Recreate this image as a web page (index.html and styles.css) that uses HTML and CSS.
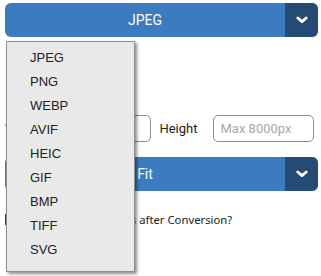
FILE: index.html
```html
<!DOCTYPE html>
<html>
<head>
<meta charset="utf-8">
<link rel="stylesheet" href="styles.css">
</head>
<body>
<div class="page">
  <div class="select select-format">
    <div class="select-value">JPEG</div>
    <div class="select-arrow">
      <svg width="12" height="8" viewBox="0 0 12 8"><path d="M1.8 2 L6 5.6 L10.2 2" fill="none" stroke="#fff" stroke-width="2.8" stroke-linecap="round" stroke-linejoin="round"/></svg>
    </div>
  </div>

  <div class="size-row">
    <label class="size-label">Width</label>
    <input class="size-input size-width" type="text" placeholder="Max 8000px">
    <label class="size-label">Height</label>
    <input class="size-input size-height" type="text" placeholder="Max 8000px">
  </div>

  <div class="select select-fit">
    <div class="select-value">Fit</div>
    <div class="select-arrow">
      <svg width="12" height="8" viewBox="0 0 12 8"><path d="M1.8 2 L6 5.6 L10.2 2" fill="none" stroke="#fff" stroke-width="2.8" stroke-linecap="round" stroke-linejoin="round"/></svg>
    </div>
  </div>

  <div class="check-row">
    <span class="check-box"></span>
    <span class="check-text">Remove EXIF Tags after Conversion?</span>
  </div>

  <ul class="menu">
    <li class="menu-item">JPEG</li>
    <li class="menu-item">PNG</li>
    <li class="menu-item">WEBP</li>
    <li class="menu-item">AVIF</li>
    <li class="menu-item">HEIC</li>
    <li class="menu-item">GIF</li>
    <li class="menu-item">BMP</li>
    <li class="menu-item">TIFF</li>
    <li class="menu-item">SVG</li>
  </ul>
</div>
</body>
</html>
```

FILE: styles.css
```css
html, body {
  margin: 0;
  padding: 0;
  background: #ffffff;
  overflow: hidden;
}

.page {
  position: relative;
  width: 321px;
  height: 276px;
  padding: 3px 3px 0 5px;
  box-sizing: border-box;
  font-family: Roboto, "Liberation Sans", Arial, sans-serif;
}

.select {
  display: flex;
  height: 34px;
  border-radius: 6px;
  overflow: hidden;
  background: #3b7bbf;
}

.select-value {
  flex: 1;
  display: flex;
  align-items: center;
  justify-content: center;
  color: #ffffff;
  font-size: 14px;
}

.select-arrow {
  width: 33px;
  display: flex;
  align-items: center;
  justify-content: center;
  background: #254a74;
}

.size-row {
  display: flex;
  align-items: center;
  margin-top: 78px;
  height: 27px;
}

.size-label {
  font-size: 13px;
  color: #222222;
}

.size-input {
  box-sizing: border-box;
  height: 27px;
  border: 1.5px solid #8c8c8c;
  border-radius: 5px;
  padding: 0 7px;
  font-family: Roboto, "Liberation Sans", Arial, sans-serif;
  font-size: 13px;
  color: #222;
  background: #fff;
  outline: none;
}

.size-input::placeholder {
  color: #a8a8a8;
}

.size-width {
  width: 105px;
  margin-left: 8px;
  margin-right: 8px;
}

.size-height {
  width: 101px;
  margin-left: 15px;
}

.select-fit {
  margin-top: 15px;
}

.check-row {
  display: flex;
  align-items: center;
  margin-top: 19px;
  height: 18px;
}

.check-box {
  width: 13px;
  height: 13px;
  border: 1px solid #333;
  border-radius: 2px;
  box-sizing: border-box;
}

.check-text {
  margin-left: 23px;
  font-family: "Noto Sans", "Open Sans", sans-serif;
  font-size: 11.3px;
  color: #222;
}

.menu {
  position: absolute;
  left: 6px;
  top: 41px;
  width: 129px;
  height: 231px;
  margin: 0;
  padding: 4px 0 0 0;
  box-sizing: border-box;
  list-style: none;
  background: #e9e9e9;
  border: 1px solid #8e8e8e;
  box-shadow: 2px 2px 3px rgba(0, 0, 0, 0.45);
}

.menu-item {
  height: 24px;
  line-height: 24px;
  padding-left: 23px;
  font-family: "Liberation Sans", Arial, sans-serif;
  font-size: 13px;
  color: #222222;
}
```
